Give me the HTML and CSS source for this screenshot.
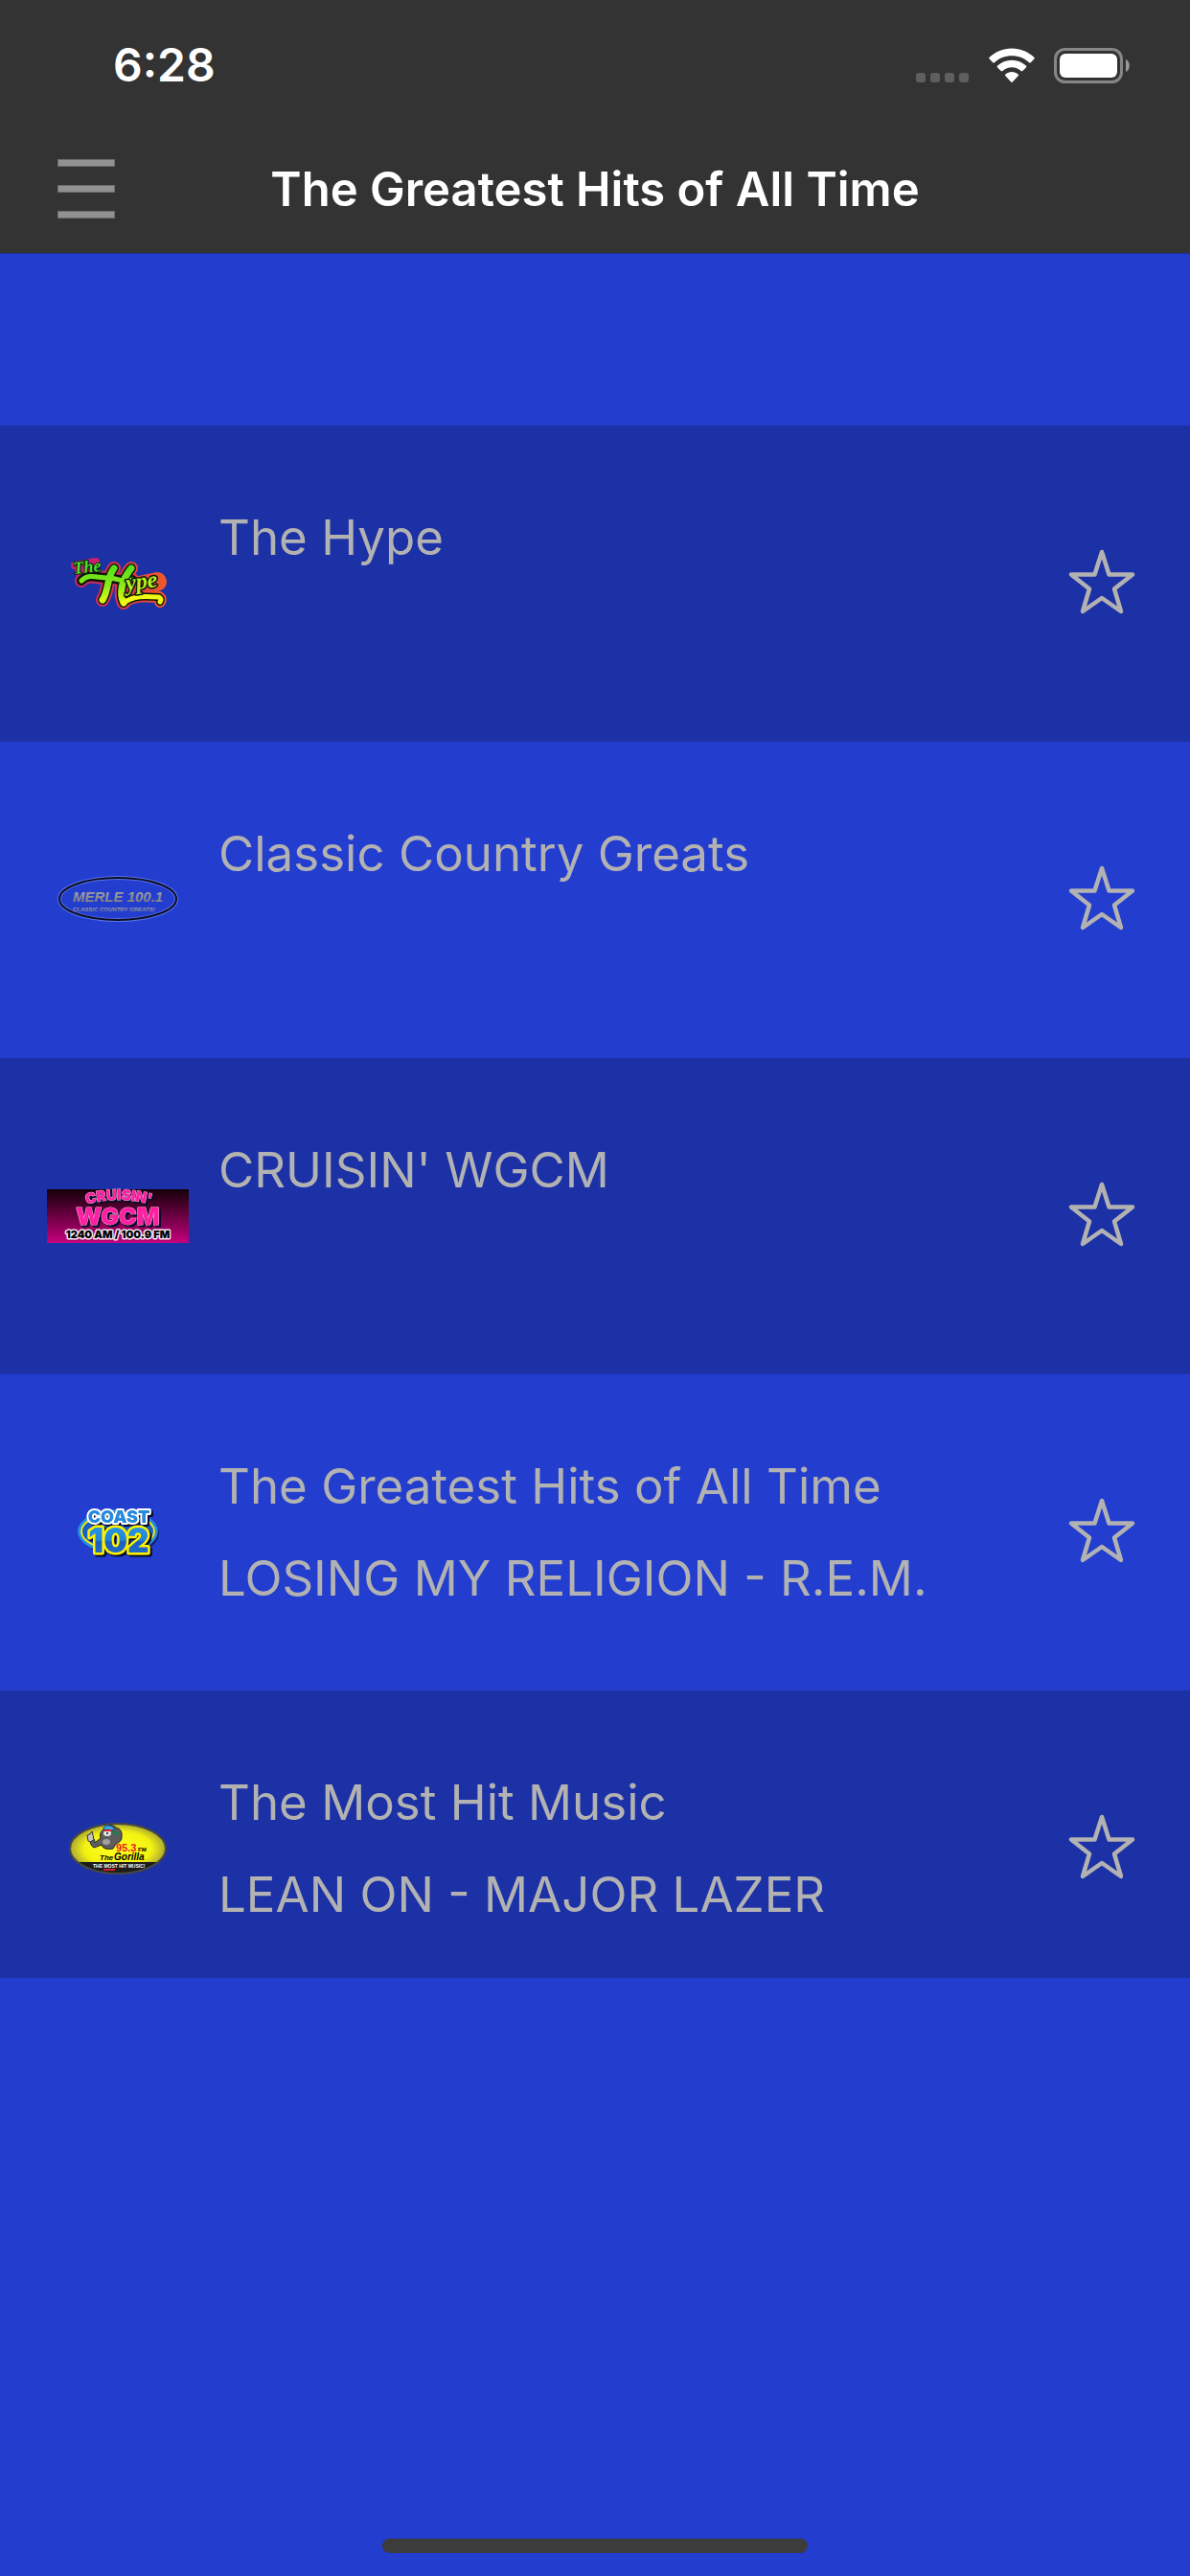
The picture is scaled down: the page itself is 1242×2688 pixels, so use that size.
FILE: index.html
```html
<!DOCTYPE html>
<html lang="en">
<head>
<meta charset="utf-8">
<meta name="viewport" content="width=device-width, initial-scale=1">
<title>The Greatest Hits of All Time</title>
<link rel="stylesheet" href="styles.css">
</head>
<body>
<svg class="defs" aria-hidden="true">
  <defs>
    <symbol id="star" viewBox="0 0 72 70">
      <path d="M36 4 L43.500 27.500 L68 27.500 L49 42.500 L56 66 L36 52 L16 66 L23 42.500 L4 27.500 L28.500 27.500 Z" fill="none" stroke="currentColor" stroke-width="4.500" stroke-linejoin="round"/>
    </symbol>
    <linearGradient id="lime" gradientUnits="userSpaceOnUse" x1="0" y1="20" x2="0" y2="64">
      <stop offset="0" stop-color="#4fdc1b"/><stop offset=".5" stop-color="#8bea1a"/><stop offset="1" stop-color="#f4fb14"/>
    </linearGradient>
    <linearGradient id="rim" gradientUnits="userSpaceOnUse" x1="24" y1="0" x2="126" y2="0">
      <stop offset="0" stop-color="#c8206e"/><stop offset=".5" stop-color="#dc3350"/><stop offset="1" stop-color="#ef5a28"/>
    </linearGradient>
    <linearGradient id="steel" x1="0" y1="0" x2="0" y2="1">
      <stop offset="0" stop-color="#acacb0"/><stop offset="1" stop-color="#77777c"/>
    </linearGradient>
    <linearGradient id="plum" x1="0" y1="0" x2="0" y2="1">
      <stop offset="0" stop-color="#140008"/><stop offset="1" stop-color="#c4007c"/>
    </linearGradient>
    <linearGradient id="sea" x1="0" y1="0" x2="0" y2="1">
      <stop offset="0" stop-color="#2a9de8"/><stop offset=".5" stop-color="#2383d8"/><stop offset=".55" stop-color="#1a5fc0"/><stop offset="1" stop-color="#2272cc"/>
    </linearGradient>
    <radialGradient id="lemon">
      <stop offset="0" stop-color="#ffff1e"/><stop offset=".7" stop-color="#f4f210"/><stop offset="1" stop-color="#a8a834"/>
    </radialGradient>
  </defs>
</svg>

<header class="top">
  <div class="status">
    <time class="clock">6:28</time>
    <div class="signals">
      <svg class="dots" viewBox="0 0 56 37" aria-label="No signal">
        <g fill="#5f5f5f"><rect y="26" width="10" height="10" rx="3"/><rect x="15" y="26" width="10" height="10" rx="3"/><rect x="30" y="26" width="10" height="10" rx="3"/><rect x="45" y="26" width="10" height="10" rx="3"/></g>
      </svg>
      <svg class="wifi" viewBox="0 0 48 37" aria-label="Wi-Fi">
        <path fill="#fff" d="M24 .5c9 0 17.200 3.500 23.300 9.300.6.600.6 1.200 0 1.800l-3.500 3.600c-.5.500-1.200.5-1.700 0C37.400 10.700 31 8.200 24 8.200S10.600 10.700 5.900 15.200c-.5.500-1.200.5-1.700 0L.7 11.600c-.6-.6-.6-1.200 0-1.800C6.800 4 15 .5 24 .5zM24 12.800c5.800 0 11 2.200 14.900 5.800.6.600.6 1.200 0 1.800l-3.600 3.600c-.5.500-1.100.5-1.700 0-2.500-2.300-5.900-3.700-9.600-3.700s-7.100 1.400-9.600 3.700c-.6.500-1.200.5-1.700 0l-3.600-3.600c-.6-.6-.6-1.200 0-1.800C13 15 18.200 12.800 24 12.800zM24 25c2.600 0 4.900 1 6.600 2.500.6.600.6 1.200 0 1.800l-5.800 6.200c-.5.500-1.100.5-1.600 0l-5.800-6.200c-.6-.6-.6-1.200 0-1.800C19.100 26 21.400 25 24 25z"/>
      </svg>
      <svg class="battery" viewBox="0 0 80 37" aria-label="Battery full">
        <rect x="1.500" y="1.500" width="69" height="34" rx="10" fill="none" stroke="#868686" stroke-width="3"/>
        <rect x="6" y="6" width="60" height="25" rx="6" fill="#fff"/>
        <path d="M75 12c5 2 5 11 0 13z" fill="#999"/>
      </svg>
    </div>
  </div>
  <div class="bar">
    <button class="menu" type="button" aria-label="Menu"><span></span><span></span><span></span></button>
    <h1 class="title">The Greatest Hits of All Time</h1>
  </div>
</header>

<main>
  <ul class="stations">
    <li class="station">
      <svg class="logo" viewBox="0 0 150 80" role="img" aria-label="The Hype">
        <g class="script" stroke-linejoin="round" stroke-linecap="round">
          <path d="M30 21L52 17M34 28L50 28" stroke="#c8206e" stroke-width="8" fill="none"/>
          <path d="M88 44L116 38" stroke="url(#rim)" stroke-width="20" fill="none"/>
          <g fill="none">
            <g stroke="url(#rim)" stroke-width="14"><path d="M37 37C44 29 54 34 64 34C75 34 82 40 90 36M71 24C63 34 66 46 59 57M89 24C79 36 76 50 81 60"/><path d="M81 60C92 52 104 53 118 54Q121 56 119 59" stroke-width="12"/></g>
            <g stroke="#0a1606" stroke-width="10"><path d="M37 37C44 29 54 34 64 34C75 34 82 40 90 36M71 24C63 34 66 46 59 57M89 24C79 36 76 50 81 60"/><path d="M81 60C92 52 104 53 118 54Q121 56 119 59" stroke-width="8"/></g>
            <g stroke="url(#lime)" stroke-width="7"><path d="M37 37C44 29 54 34 64 34C75 34 82 40 90 36" stroke-width="5"/><path d="M71 24C63 34 66 46 59 57M89 24C79 36 76 50 81 60"/><path d="M81 60C92 52 104 53 118 54Q121 56 119 59" stroke="#f0f814" stroke-width="5"/></g>
          </g>
          <g transform="rotate(-6 28 29)"><text x="29" y="30" font-size="18" fill="#4be02c" stroke="#0a1606" stroke-width="2" paint-order="stroke">The</text></g>
          <g transform="rotate(-8 88 46)"><text x="84" y="47" font-size="24" fill="#b8ef22" stroke="#0a1606" stroke-width="3" paint-order="stroke">ype</text></g>
        </g>
      </svg>
      <div class="info"><h2 class="line">The Hype</h2></div>
      <button class="fav" type="button" aria-label="Favorite The Hype"><svg><use href="#star"/></svg></button>
    </li>
    <li class="station">
      <svg class="logo" viewBox="0 0 150 80" role="img" aria-label="Merle 100.1 Classic Country Greats!">
        <ellipse cx="75" cy="39" rx="61" ry="22" fill="none" stroke="#5873ec" stroke-width="4"/>
        <ellipse cx="75" cy="39" rx="61" ry="22" fill="none" stroke="#0b0d22" stroke-width="2"/>
        <g class="slab" fill="url(#steel)">
          <text x="28" y="42" font-size="15">MERLE 100.1</text>
          <text x="28" y="52" font-size="6">CLASSIC COUNTRY GREATS!</text>
        </g>
      </svg>
      <div class="info"><h2 class="line">Classic Country Greats</h2></div>
      <button class="fav" type="button" aria-label="Favorite Classic Country Greats"><svg><use href="#star"/></svg></button>
    </li>
    <li class="station">
      <svg class="logo" viewBox="0 0 150 80" role="img" aria-label="Cruisin' WGCM 1240 AM / 100.9 FM">
        <rect x="1" y="12" width="148" height="56" fill="url(#plum)"/>
        <g class="heavy" fill="#ff1fa2" stroke-linejoin="round" text-anchor="middle">
          <path id="arc" d="M38 29Q75 17 114 29" fill="none"/>
          <text class="drop" font-size="15" stroke="#f7b6dd" stroke-width="1" paint-order="stroke"><textPath href="#arc" startOffset="50%">CRUISIN'</textPath></text>
          <text class="drop" x="75" y="49" font-size="25" stroke="#f7b6dd" stroke-width="1" paint-order="stroke">WGCM</text>
          <text x="75" y="63" font-size="11" fill="#000" stroke="#f3e3ee" stroke-width="3" paint-order="stroke">1240 AM / 100.9 FM</text>
        </g>
      </svg>
      <div class="info"><h2 class="line">CRUISIN' WGCM</h2></div>
      <button class="fav" type="button" aria-label="Favorite Cruisin' WGCM"><svg><use href="#star"/></svg></button>
    </li>
    <li class="station">
      <svg class="logo" viewBox="0 0 150 80" role="img" aria-label="Coast 102">
        <ellipse cx="77" cy="41" rx="41" ry="23" fill="#10205e"/>
        <ellipse cx="75" cy="39" rx="42" ry="23" fill="#258fe2"/>
        <ellipse cx="75" cy="39" rx="38" ry="19" fill="#1760c2" stroke="#efe71a" stroke-width="2"/>
        <g class="heavy" stroke-linejoin="round" text-anchor="middle">
          <text class="drop" x="76" y="30" font-size="18" fill="#2589dc" stroke="#fff" stroke-width="4" paint-order="stroke">COAST</text>
          <text class="drop" x="76" y="61" font-size="35" fill="url(#sea)" stroke="#fff200" stroke-width="5" paint-order="stroke">102</text>
        </g>
      </svg>
      <div class="info"><h2 class="line">The Greatest Hits of All Time</h2><p class="line">LOSING MY RELIGION - R.E.M.</p></div>
      <button class="fav" type="button" aria-label="Favorite The Greatest Hits of All Time"><svg><use href="#star"/></svg></button>
    </li>
    <li class="station">
      <svg class="logo" viewBox="0 0 150 80" role="img" aria-label="95.3 FM The Gorilla, The Most Hit Music!">
        <clipPath id="oval"><ellipse cx="75" cy="40" rx="50" ry="26"/></clipPath>
        <ellipse cx="75" cy="40" rx="50" ry="26" fill="url(#lemon)"/>
        <rect x="20" y="54" width="110" height="14" fill="#1c1c1c" clip-path="url(#oval)"/>
        <ellipse cx="75" cy="40" rx="50" ry="26" fill="none" stroke="#4a4a3c" stroke-width="2"/>
        <path d="M57 29Q55 24 60 20Q66 12 73 18Q80 20 79 27Q80 32 73 35L70 40Q60 42 58 36L50 39Q45 36 47 30Q51 28 51 34Z" fill="#5d5d60" stroke="#252525"/>
        <path d="M44 32L43 26L46 25L48 22L49 26L50 31L46 33Z" fill="#c4c4c4" stroke="#333" stroke-width="1"/>
        <ellipse cx="64" cy="24" rx="4" ry="3" fill="#e8e8e8"/><circle cx="64" cy="24" r="1" fill="#111"/><ellipse cx="63" cy="33" rx="4" ry="3" fill="#a5a0a0"/>
        <path d="M60 20Q60 15 66 16Q71 16 71 21Z" fill="#35a8e6" stroke="#184e78"/><path d="M61 21H69" stroke="#e12127" stroke-width="2"/><path d="M70 22L75 25" stroke="#15824a" stroke-width="3"/>
        <g class="cond">
          <text x="73" y="43" font-size="11" fill="#ea1c24">95.3</text><text x="96" y="43" font-size="6">FM</text>
          <text x="56" y="52" font-size="8" font-style="italic">The</text><text x="71" y="52" font-size="10" font-style="italic">Gorilla</text>
          <text x="49" y="60" font-size="5" fill="#fff">THE MOST HIT MUSIC!</text>
        </g>
        <path d="M60 62H72" stroke="#d61c32" stroke-width="2"/>
      </svg>
      <div class="info"><h2 class="line">The Most Hit Music</h2><p class="line">LEAN ON - MAJOR LAZER</p></div>
      <button class="fav" type="button" aria-label="Favorite The Most Hit Music"><svg><use href="#star"/></svg></button>
    </li>
  </ul>
</main>
<footer class="home"><span></span></footer>
</body>
</html>
```

FILE: styles.css
```css
* { box-sizing: border-box; }
body {
  margin: 0;
  min-height: 100vh;
  display: flex;
  flex-direction: column;
  background: #233dcf;
  color: #b2b2b2;
  font-family: Inter, "Liberation Sans", sans-serif;
}
.defs { position: absolute; width: 0; height: 0; }
button { border: 0; padding: 0; background: none; color: inherit; }

.top { background: #333; color: #fff; border-bottom: 1px solid #22309a; }
.status {
  display: flex;
  align-items: center;
  justify-content: space-between;
  height: 132px;
  padding: 4px 62px 0 118px;
}
.clock { font-size: 48px; line-height: 60px; font-weight: 600; }
.signals { display: flex; gap: 20px; }
.signals svg { height: 37px; }
.dots { width: 56px; }
.wifi { width: 48px; }
.battery { width: 80px; }
.bar {
  display: grid;
  grid-template-columns: 60px 1fr 60px;
  align-items: center;
  height: 132px;
  padding: 0 60px;
}
.menu { display: grid; gap: 19px; padding-bottom: 2px; }
.menu span { height: 8px; background: #919191; border: 1px solid #6c6c6c; }
.title {
  margin: 0;
  font-size: 49px;
  line-height: 60px;
  font-weight: 600;
  text-align: center;
}

.stations { margin: 0; padding: 179px 0 0; list-style: none; }
.station {
  display: grid;
  grid-template-columns: 150px 1fr 72px;
  column-gap: 30px;
  height: 330px;
  padding: 0 56px 0 48px;
}
.station:nth-child(odd) { background: #1c31a6; }
.station:last-child { height: 300px; }
.logo { width: 150px; height: 80px; margin-top: 125px; }
.info { padding: 69px 0 0; }
.line {
  margin: 0;
  font-size: 51px;
  line-height: 96px;
  font-weight: 400;
  white-space: nowrap;
}
.fav { height: 70px; margin-top: 128px; }
.fav svg { display: block; width: 72px; height: 70px; }

.script { font-family: "Liberation Serif", serif; font-weight: 700; font-style: italic; }
.slab { font-family: "Liberation Sans Narrow", "Liberation Sans", sans-serif; font-weight: 700; font-style: italic; }
.heavy { font-family: Inter, sans-serif; font-weight: 900; }
.cond { font-family: "Liberation Sans Narrow", "Liberation Sans", sans-serif; font-weight: 700; }
.drop { filter: drop-shadow(2px 2px 0 #080c28); }

.home { display: flex; justify-content: center; margin-top: auto; padding-bottom: 24px; }
.home span { width: 444px; height: 15px; border-radius: 8px; background: #3c3c3c; }
```
